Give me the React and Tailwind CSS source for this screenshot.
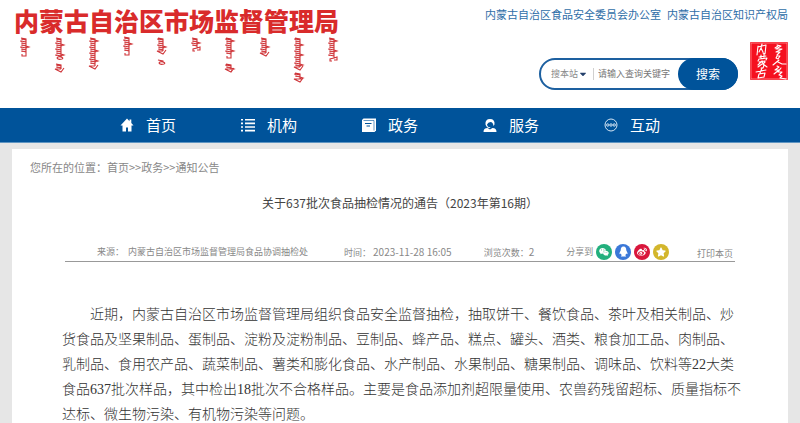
import { FaCaretDown, FaStar, FaWeibo, FaWeixin } from 'react-icons/fa';

// Vertical script under the bureau name: spine x, top, bottom, tail shape
const scriptWords = [
  [14, 2, 18, 'hook'],
  [49, 2, 21, 'loop'],
  [49, 28, 33, 'sweep'],
  [83, 2, 30, 'sweep'],
  [117, 1, 17, 'hook'],
  [151, 2, 15, 'sweep'],
  [151, 24, 26, 'loop'],
  [185, 2, 12, 'curl'],
  [219, 2, 20, 'hook'],
  [219, 28, 33, 'sweep'],
  [254, 2, 17, 'sweep'],
  [288, 2, 31, 'sweep'],
  [288, 37, 43, 'sweep'],
  [322, 2, 22, 'curl'],
];

const tails = {
  hook: 'l0 2 l-4 0 l0 -2',
  loop: 'q3 1 1 2 q-4 1 -5 -1 q1 -2 4 -1',
  sweep: 'l-6 0 l6 3 l3 -4',
  curl: 'l3 -1 l0 3 l-3 0 M{x} {y} l-4 1 l0 2 l2 0',
};

function wordPath([x, top, bottom, tail], index) {
  let d = `M${x - 5} ${top} l5 1 V${bottom}`;
  for (let y = top + 2; y < bottom; y += 2) {
    const reach = (y + index) % 3 === 0 ? 5 : 4;
    d += ` M${x} ${y} l-${reach} -1 l0 1`;
    if ((y + index * 2) % 5 === 0) d += ` M${x} ${y} l3 1 l-3 1`;
  }
  const end = tails[tail].replaceAll('{x}', x).replaceAll('{y}', bottom);
  return `${d} M${x} ${bottom} ${end}`;
}

function MongolianScript() {
  return (
    <svg width="336" height="50" viewBox="0 0 336 50" fill="none" stroke="#cf3438" strokeWidth="1.1" aria-hidden="true">
      {scriptWords.map((word, i) => (
        <path key={i} d={wordPath(word, i)} />
      ))}
    </svg>
  );
}

function Seal() {
  return (
    <svg width="38" height="38" viewBox="0 0 38 38" fill="none" aria-hidden="true">
      <rect width="38" height="38" rx="1" fill="#f5101f" />
      <rect x="1" y="1" width="36" height="36" stroke="#fbb" strokeWidth="0.6" />
      <g stroke="#fff" strokeWidth="1.1" strokeLinecap="round" strokeLinejoin="round">
        <path d="M8 4l-1 9M8 5l8-2-1 9-2-1M12 2l-1 4-2 4M11 6l2 4" />
        <path d="M9 15l7-1M11 13v3M14 12v3M8 19l1-2 8-1-1 2M9 20l6-1M12 19l-4 4M12 20q3 3 1 6l-2 0M12 22l-4 3M15 20l-2 2 4 3" />
        <path d="M6 30l10-2M12 26l-2 5M9 32l-1 4 6-1 1-4-6 1" />
        <path d="M27 3l4 1-5 3 6 0-6 3 4 0-3 3M25 6l3-2M27 14l3 0-2 3-2-1z" />
        <path d="M29 18l-6 5M28 20l4 2 4 0M27 24l2 1-4 3 4 0-5 4M31 26l-3 4 4 0-3 3 3 1-2 2 6 1" />
      </g>
    </svg>
  );
}

const HomeIcon = () => (
  <svg width="14" height="14" viewBox="0 0 14 14" fill="#fff">
    <path d="M7 0.500L0.500 7.500h2V13.500H6V9.500h2v4h3.500V7.500H13.500l-2.200-2.500V1.500H9.500v1.700z" />
  </svg>
);

const ListIcon = () => (
  <svg width="14" height="14" viewBox="0 0 14 14" fill="#fff">
    <path d="M0 1h2v1.6H0zM4 1h10v1.6H4zM0 4.6h2v1.6H0zM4 4.6h10v1.6H4zM0 8.2h2v1.6H0zM4 8.2h10v1.6H4zM0 11.8h2v1.6H0zM4 11.8h10v1.6H4z" />
  </svg>
);

const NewsIcon = () => (
  <svg width="14" height="14" viewBox="0 0 14 14">
    <path d="M0 2L1.500 0.500H14v12L12.500 14H0z" fill="#fff" />
    <path d="M1.500 2.500h10.500v10" fill="none" stroke="#00539a" strokeWidth="0.600" />
    <path d="M3 5.500h6.500M4.500 8h3.500" fill="none" stroke="#00539a" />
  </svg>
);

const ServiceIcon = () => (
  <svg width="14" height="14" viewBox="0 0 14 14">
    <path d="M2.5 6.5Q2 1 7 1t4.500 5.500L10.500 8Q10 4 7.500 4T4 6.500L4.500 8Q5.500 9.500 7.500 9.200L7 10Q4 10.500 2.500 6.500z" fill="#fff" />
    <path d="M0.500 14q0-4 4-4L7 11.500 9.500 10q4 0 4 4z" fill="#fff" />
  </svg>
);

const ChatIcon = () => (
  <svg width="14" height="14" viewBox="0 0 14 14" fill="none" stroke="#d5e6f5">
    <circle cx="7" cy="7" r="6" />
    <circle cx="3.800" cy="7" r="1.200" />
    <circle cx="7" cy="7" r="1.200" />
    <circle cx="10.200" cy="7" r="1.200" />
  </svg>
);

const QqIcon = () => (
  <svg width="11" height="11" viewBox="0 0 12 12" fill="#fff">
    <path d="M6 0.500C3.500 0.500 3 2.500 3 4.500L1.500 8l0.500 1 1-0.800L4 10l-1 1.500h6L8 10l1-1.800 1 0.800 0.500-1L9 4.500C9 2.500 8.500 0.500 6 0.500z" />
  </svg>
);

const navItems = [
  { label: '首页', Icon: HomeIcon },
  { label: '机构', Icon: ListIcon },
  { label: '政务', Icon: NewsIcon },
  { label: '服务', Icon: ServiceIcon },
  { label: '互动', Icon: ChatIcon },
];

function Header() {
  return (
    <header className="flex h-27 justify-between bg-white px-3">
      <div className="pt-1">
        <h1 className="pl-0.5 text-[25px] leading-8 font-black whitespace-nowrap text-[#d92b2b]">
          内蒙古自治区市场监督管理局
        </h1>
        <MongolianScript />
      </div>
      <div className="flex flex-col items-end">
        <nav className="flex gap-1.5 pt-1 text-[11px] leading-5 whitespace-nowrap text-[#2f6ea8]">
          <a href="#food">内蒙古自治区食品安全委员会办公室</a>
          <a href="#ip">内蒙古自治区知识产权局</a>
        </nav>
        <div className="flex gap-3 pt-[18px]">
          <form
            className="mt-4 flex h-8 w-[199px] items-center rounded-full border-2 border-[#1d60a0] pl-[10px] text-[9px]"
            onSubmit={(e) => e.preventDefault()}
          >
            <select aria-label="搜索范围" className="w-7 appearance-none text-[#8a8a8a]">
              <option>搜本站</option>
            </select>
            <FaCaretDown className="h-2.5 w-2 text-[#24406c]" />
            <span className="mr-1 ml-1.5 h-3 w-px bg-[#d0d0d0]" />
            <input
              type="text"
              aria-label="关键字"
              placeholder="请输入查询关键字"
              className="min-w-0 flex-1 outline-none placeholder:text-[#777]"
            />
            <button type="submit" className="-mr-0.5 h-8 w-[60px] rounded-full bg-[#00539a] text-xs text-white">
              搜索
            </button>
          </form>
          <Seal />
        </div>
      </div>
    </header>
  );
}

function NavBar() {
  return (
    <nav className="border-b border-[#5f95c2] bg-[#00539a] pl-[15%]">
      <ul className="flex">
        {navItems.map(({ label, Icon }) => (
          <li key={label} className="w-[121px]">
            <a href="#nav" className="flex h-[34px] items-center gap-3 text-[15px] text-white">
              <Icon />
              {label}
            </a>
          </li>
        ))}
      </ul>
    </nav>
  );
}

function ShareButton({ label, className, children }) {
  return (
    <button
      type="button"
      aria-label={label}
      className={`flex size-4 items-center justify-center rounded-full text-[10px] text-white ${className}`}
    >
      {children}
    </button>
  );
}

function ArticleMeta() {
  return (
    <div className="flex h-5 items-center border-b border-[#999] pl-8 text-[9px] whitespace-nowrap text-[#888]">
      <span>来源：</span>
      <span className="ml-1">内蒙古自治区市场监督管理局食品协调抽检处</span>
      <span className="ml-9">
        时间： <span className="text-[10px]">2023-11-28 16:05</span>
      </span>
      <span className="ml-8">浏览次数：<span className="text-[10px]">2</span></span>
      <div className="ml-8 flex items-center gap-[3px]">
        <span>分享到</span>
        <ShareButton label="微信" className="bg-[#22b07d]"><FaWeixin /></ShareButton>
        <ShareButton label="QQ" className="bg-[#3b78d8]"><QqIcon /></ShareButton>
        <ShareButton label="微博" className="bg-[#d9163c]"><FaWeibo /></ShareButton>
        <ShareButton label="收藏" className="bg-[#d3b62c]"><FaStar /></ShareButton>
      </div>
      <button type="button" className="mt-1 mr-0.5 ml-auto">打印本页</button>
    </div>
  );
}

export default function App() {
  return (
    <div className="min-h-screen overflow-hidden bg-[#e6e6e6] font-['Noto_Sans_CJK_SC',sans-serif]">
      <Header />
      <NavBar />
      <main className="mx-3 mt-1.5 min-h-[274px] bg-white">
        <nav className="pt-2 pl-[18px] text-[11px] leading-5 text-[#888]">
          <a href="#pos">您所在的位置：</a>
          <a href="#home">首页</a>&gt;&gt;<a href="#gov">政务</a>&gt;&gt;<a href="#notice">通知公告</a>
        </nav>
        <article className="pt-4">
          <h2 className="text-center text-xs leading-5 text-[#444]">关于637批次食品抽检情况的通告（2023年第16期）</h2>
          <div className="mx-[53px] mt-[29px]">
            <ArticleMeta />
          </div>
          <p className="mr-[46px] ml-[50px] pt-10 indent-[2em] font-['Liberation_Serif','Noto_Sans_CJK_SC',serif] text-sm leading-[25px] font-light text-[#333]">
            近期，内蒙古自治区市场监督管理局组织食品安全监督抽检，抽取饼干、餐饮食品、茶叶及相关制品、炒货食品及坚果制品、蛋制品、淀粉及淀粉制品、豆制品、蜂产品、糕点、罐头、酒类、粮食加工品、肉制品、乳制品、食用农产品、蔬菜制品、薯类和膨化食品、水产制品、水果制品、糖果制品、调味品、饮料等22大类食品637批次样品，其中检出18批次不合格样品。主要是食品添加剂超限量使用、农兽药残留超标、质量指标不达标、微生物污染、有机物污染等问题。
          </p>
        </article>
      </main>
    </div>
  );
}
